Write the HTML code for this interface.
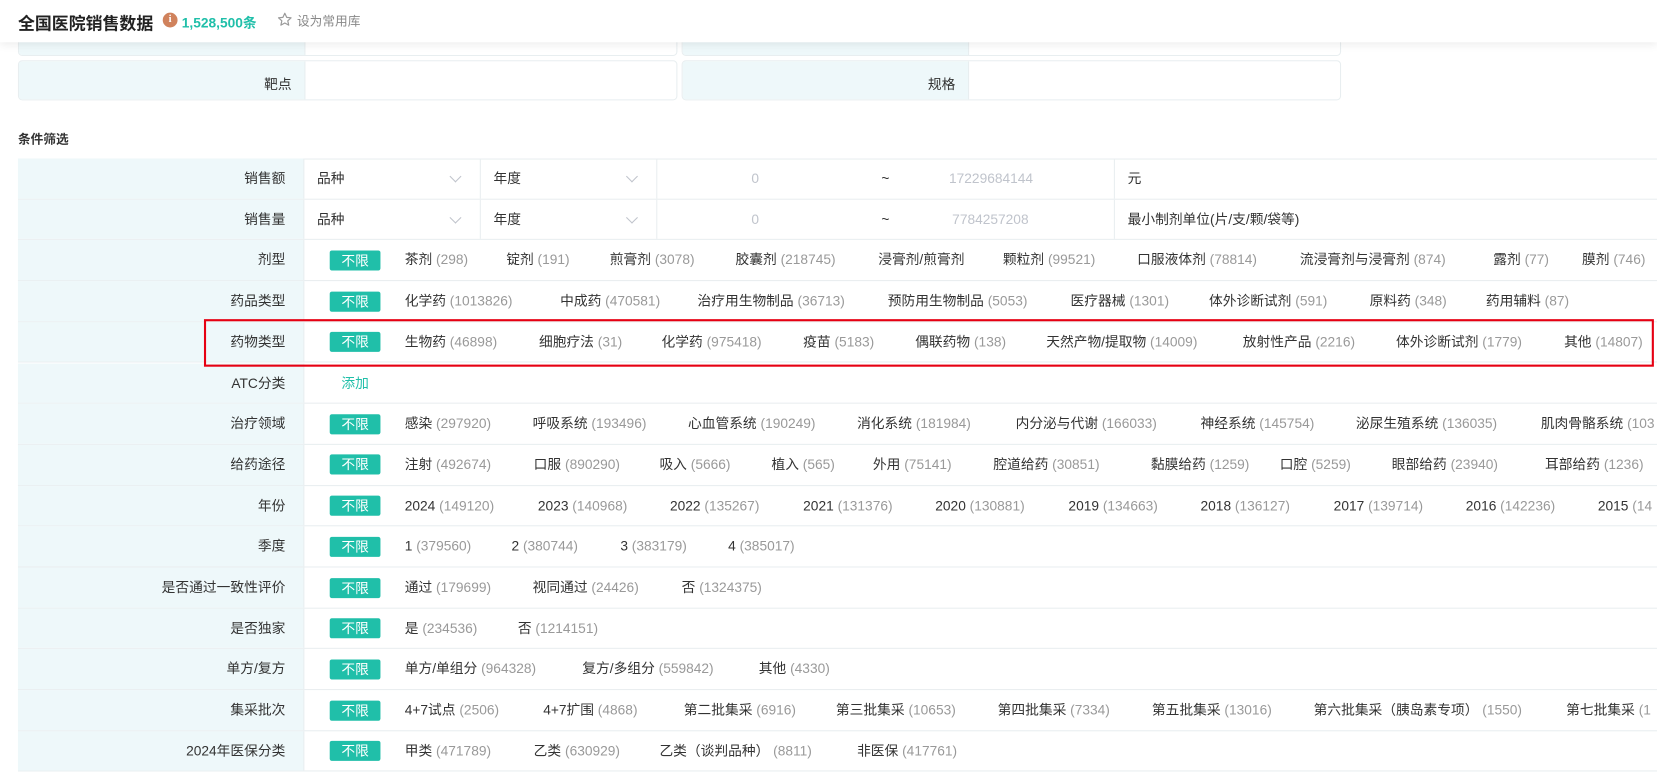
<!DOCTYPE html>
<html><head><meta charset="utf-8">
<style>
*{margin:0;padding:0;box-sizing:border-box}
html,body{width:1657px;height:768px;overflow:hidden;background:#fff}
#s{position:absolute;left:0;top:0;width:1568px;height:727px;transform:scale(1.0568);transform-origin:0 0;font-family:"Liberation Sans","Noto Sans CJK SC",sans-serif;font-size:13px;color:#333}
.a{position:absolute;white-space:nowrap}
.c{color:#999}
.hdr{position:absolute;left:0;top:0;width:1568px;height:40px;background:#fff;box-shadow:0 2px 8px rgba(0,0,0,.08);z-index:5}
.card{position:absolute;border:1px solid #e8eef0;border-radius:4px;overflow:hidden;background:#fff}
.card .l{position:absolute;left:0;top:0;bottom:0;width:271px;background:#eef8fa;border-right:1px solid #e8eef0}
.row{position:absolute;left:17px;width:1560px;height:38.7px;border-bottom:1px solid #e9eef0}
.row .lb{position:absolute;left:0;top:0;width:271px;height:100%;background:#eef8fa;text-align:right;padding-right:17px;line-height:37.7px;border-right:1px solid #e9eef0}
.row .it{position:absolute;top:0;line-height:37.7px;white-space:nowrap}
.tag{position:absolute;left:295px;top:9.5px;width:48px;height:19px;background:#20bfa9;color:#fff;border-radius:2px;text-align:center;line-height:19px;font-size:13px}
.v{position:absolute;top:0;height:100%;border-left:1px solid #e9eef0}
.chev{position:absolute;top:13px;width:8px;height:8px;border-right:1px solid #c0c4cc;border-bottom:1px solid #c0c4cc;transform:rotate(45deg)}
.g{color:#c0c4cc}
</style></head><body><div id="s">
<div class="hdr">
<div class="a" style="left:17px;top:9px;font-size:16px;font-weight:bold;color:#222">全国医院销售数据</div>
<div class="a" style="left:154px;top:12px;width:14px;height:14px;border-radius:50%;background:#d0825c;color:#fff;font-size:10px;font-weight:bold;text-align:center;line-height:14px;font-family:'Liberation Serif',serif">i</div>
<div class="a" style="left:172px;top:11px;font-size:13px;font-weight:bold;color:#20bfa9">1,528,500条</div>
<svg class="a" style="left:262px;top:11px" width="15" height="15" viewBox="0 0 24 24"><path d="M12 2.5l2.9 6.2 6.6.7-5 4.5 1.4 6.6L12 17.2l-5.9 3.3 1.4-6.6-5-4.5 6.6-.7z" fill="none" stroke="#999" stroke-width="1.8" stroke-linejoin="round"/></svg>
<div class="a" style="left:281px;top:11px;font-size:12px;color:#888">设为常用库</div>
</div>
<div class="card" style="left:17px;top:20px;width:624px;height:33px"><div class="l"></div></div>
<div class="card" style="left:645px;top:20px;width:624px;height:33px"><div class="l"></div></div>
<div class="card" style="left:17px;top:57px;width:624px;height:38px"><div class="l"></div><div class="a" style="right:364px;top:11px">靶点</div></div>
<div class="card" style="left:645px;top:57px;width:624px;height:38px"><div class="l"></div><div class="a" style="right:364px;top:11px">规格</div></div>
<div class="a" style="left:17px;top:123px;font-size:12px;font-weight:bold">条件筛选</div>
<div style="position:absolute;left:17px;top:150px;width:1560px;height:1px;background:#e9eef0"></div>

<div class="row" style="top:150px"><div class="lb">销售额</div>
<div class="it" style="left:283px">品种</div><div class="chev" style="left:410px"></div><div class="v" style="left:437px"></div>
<div class="it" style="left:450px">年度</div><div class="chev" style="left:577px"></div><div class="v" style="left:604px"></div>
<div class="it g" style="left:694px">0</div><div class="it" style="left:817px">~</div><div class="it g" style="left:881px">17229684144</div>
<div class="v" style="left:1037px"></div><div class="it" style="left:1050px">元</div></div>

<div class="row" style="top:188.7px"><div class="lb">销售量</div>
<div class="it" style="left:283px">品种</div><div class="chev" style="left:410px"></div><div class="v" style="left:437px"></div>
<div class="it" style="left:450px">年度</div><div class="chev" style="left:577px"></div><div class="v" style="left:604px"></div>
<div class="it g" style="left:694px">0</div><div class="it" style="left:817px">~</div><div class="it g" style="left:884px">7784257208</div>
<div class="v" style="left:1037px"></div><div class="it" style="left:1050px">最小制剂单位(片/支/颗/袋等)</div></div>

<div class="row" style="top:227.4px"><div class="lb">剂型</div><div class="tag">不限</div>
<div class="it" style="left:366px">茶剂 <span class="c">(298)</span></div>
<div class="it" style="left:462px">锭剂 <span class="c">(191)</span></div>
<div class="it" style="left:560px">煎膏剂 <span class="c">(3078)</span></div>
<div class="it" style="left:679px">胶囊剂 <span class="c">(218745)</span></div>
<div class="it" style="left:814px">浸膏剂/煎膏剂</div>
<div class="it" style="left:932px">颗粒剂 <span class="c">(99521)</span></div>
<div class="it" style="left:1059px">口服液体剂 <span class="c">(78814)</span></div>
<div class="it" style="left:1213px">流浸膏剂与浸膏剂 <span class="c">(874)</span></div>
<div class="it" style="left:1396px">露剂 <span class="c">(77)</span></div>
<div class="it" style="left:1480px">膜剂 <span class="c">(746)</span></div></div>

<div class="row" style="top:266.1px"><div class="lb">药品类型</div><div class="tag">不限</div>
<div class="it" style="left:366px">化学药 <span class="c">(1013826)</span></div>
<div class="it" style="left:513px">中成药 <span class="c">(470581)</span></div>
<div class="it" style="left:643px">治疗用生物制品 <span class="c">(36713)</span></div>
<div class="it" style="left:823px">预防用生物制品 <span class="c">(5053)</span></div>
<div class="it" style="left:996px">医疗器械 <span class="c">(1301)</span></div>
<div class="it" style="left:1127px">体外诊断试剂 <span class="c">(591)</span></div>
<div class="it" style="left:1279px">原料药 <span class="c">(348)</span></div>
<div class="it" style="left:1389px">药用辅料 <span class="c">(87)</span></div></div>

<div class="row" style="top:304.8px"><div class="lb">药物类型</div><div class="tag">不限</div>
<div class="it" style="left:366px">生物药 <span class="c">(46898)</span></div>
<div class="it" style="left:493px">细胞疗法 <span class="c">(31)</span></div>
<div class="it" style="left:609px">化学药 <span class="c">(975418)</span></div>
<div class="it" style="left:743px">疫苗 <span class="c">(5183)</span></div>
<div class="it" style="left:849px">偶联药物 <span class="c">(138)</span></div>
<div class="it" style="left:973px">天然产物/提取物 <span class="c">(14009)</span></div>
<div class="it" style="left:1159px">放射性产品 <span class="c">(2216)</span></div>
<div class="it" style="left:1304px">体外诊断试剂 <span class="c">(1779)</span></div>
<div class="it" style="left:1463px">其他 <span class="c">(14807)</span></div></div>

<div class="row" style="top:343.5px"><div class="lb">ATC分类</div>
<div class="it" style="left:306px;color:#20bfa9">添加</div></div>

<div class="row" style="top:382.2px"><div class="lb">治疗领域</div><div class="tag">不限</div>
<div class="it" style="left:366px">感染 <span class="c">(297920)</span></div>
<div class="it" style="left:487px">呼吸系统 <span class="c">(193496)</span></div>
<div class="it" style="left:634px">心血管系统 <span class="c">(190249)</span></div>
<div class="it" style="left:794px">消化系统 <span class="c">(181984)</span></div>
<div class="it" style="left:944px">内分泌与代谢 <span class="c">(166033)</span></div>
<div class="it" style="left:1119px">神经系统 <span class="c">(145754)</span></div>
<div class="it" style="left:1266px">泌尿生殖系统 <span class="c">(136035)</span></div>
<div class="it" style="left:1441px">肌肉骨骼系统 <span class="c">(103</span></div></div>

<div class="row" style="top:420.9px"><div class="lb">给药途径</div><div class="tag">不限</div>
<div class="it" style="left:366px">注射 <span class="c">(492674)</span></div>
<div class="it" style="left:488px">口服 <span class="c">(890290)</span></div>
<div class="it" style="left:607px">吸入 <span class="c">(5666)</span></div>
<div class="it" style="left:713px">植入 <span class="c">(565)</span></div>
<div class="it" style="left:809px">外用 <span class="c">(75141)</span></div>
<div class="it" style="left:923px">腔道给药 <span class="c">(30851)</span></div>
<div class="it" style="left:1072px">黏膜给药 <span class="c">(1259)</span></div>
<div class="it" style="left:1194px">口腔 <span class="c">(5259)</span></div>
<div class="it" style="left:1300px">眼部给药 <span class="c">(23940)</span></div>
<div class="it" style="left:1445px">耳部给药 <span class="c">(1236)</span></div></div>

<div class="row" style="top:459.6px"><div class="lb">年份</div><div class="tag">不限</div>
<div class="it" style="left:366px">2024 <span class="c">(149120)</span></div>
<div class="it" style="left:492px">2023 <span class="c">(140968)</span></div>
<div class="it" style="left:617px">2022 <span class="c">(135267)</span></div>
<div class="it" style="left:743px">2021 <span class="c">(131376)</span></div>
<div class="it" style="left:868px">2020 <span class="c">(130881)</span></div>
<div class="it" style="left:994px">2019 <span class="c">(134663)</span></div>
<div class="it" style="left:1119px">2018 <span class="c">(136127)</span></div>
<div class="it" style="left:1245px">2017 <span class="c">(139714)</span></div>
<div class="it" style="left:1370px">2016 <span class="c">(142236)</span></div>
<div class="it" style="left:1495px">2015 <span class="c">(14</span></div></div>

<div class="row" style="top:498.3px"><div class="lb">季度</div><div class="tag">不限</div>
<div class="it" style="left:366px">1 <span class="c">(379560)</span></div>
<div class="it" style="left:467px">2 <span class="c">(380744)</span></div>
<div class="it" style="left:570px">3 <span class="c">(383179)</span></div>
<div class="it" style="left:672px">4 <span class="c">(385017)</span></div></div>

<div class="row" style="top:537px"><div class="lb">是否通过一致性评价</div><div class="tag">不限</div>
<div class="it" style="left:366px">通过 <span class="c">(179699)</span></div>
<div class="it" style="left:487px">视同通过 <span class="c">(24426)</span></div>
<div class="it" style="left:628px">否 <span class="c">(1324375)</span></div></div>

<div class="row" style="top:575.7px"><div class="lb">是否独家</div><div class="tag">不限</div>
<div class="it" style="left:366px">是 <span class="c">(234536)</span></div>
<div class="it" style="left:473px">否 <span class="c">(1214151)</span></div></div>

<div class="row" style="top:614.4px"><div class="lb">单方/复方</div><div class="tag">不限</div>
<div class="it" style="left:366px">单方/单组分 <span class="c">(964328)</span></div>
<div class="it" style="left:534px">复方/多组分 <span class="c">(559842)</span></div>
<div class="it" style="left:701px">其他 <span class="c">(4330)</span></div></div>

<div class="row" style="top:653.1px"><div class="lb">集采批次</div><div class="tag">不限</div>
<div class="it" style="left:366px">4+7试点 <span class="c">(2506)</span></div>
<div class="it" style="left:497px">4+7扩围 <span class="c">(4868)</span></div>
<div class="it" style="left:630px">第二批集采 <span class="c">(6916)</span></div>
<div class="it" style="left:774px">第三批集采 <span class="c">(10653)</span></div>
<div class="it" style="left:927px">第四批集采 <span class="c">(7334)</span></div>
<div class="it" style="left:1073px">第五批集采 <span class="c">(13016)</span></div>
<div class="it" style="left:1226px">第六批集采（胰岛素专项） <span class="c">(1550)</span></div>
<div class="it" style="left:1465px">第七批集采 <span class="c">(1</span></div></div>

<div class="row" style="top:691.8px"><div class="lb">2024年医保分类</div><div class="tag">不限</div>
<div class="it" style="left:366px">甲类 <span class="c">(471789)</span></div>
<div class="it" style="left:488px">乙类 <span class="c">(630929)</span></div>
<div class="it" style="left:607px">乙类（谈判品种） <span class="c">(8811)</span></div>
<div class="it" style="left:794px">非医保 <span class="c">(417761)</span></div></div>

<div class="a" style="left:193px;top:302px;width:1372px;height:45px;border:2px solid #e60012;z-index:6"></div>
</div></body></html>
